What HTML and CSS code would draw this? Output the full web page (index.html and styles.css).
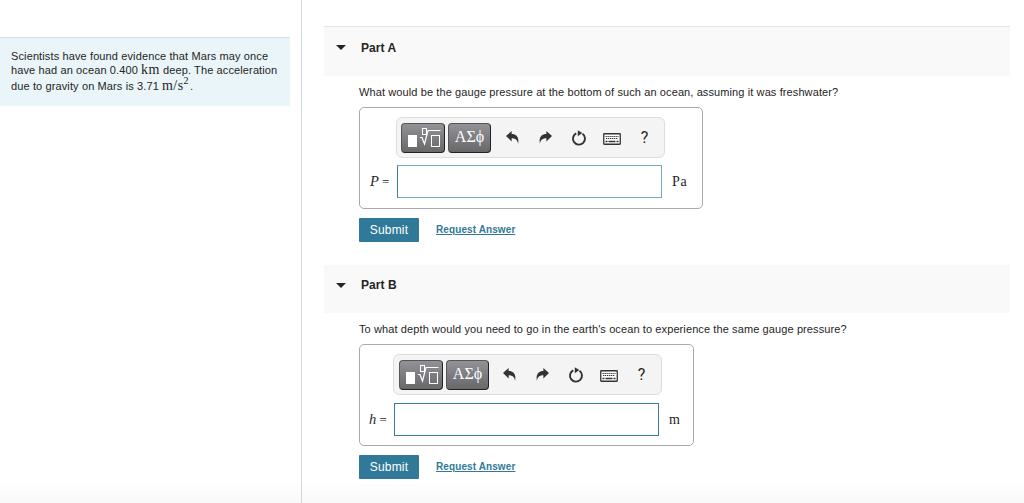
FILE: index.html
```
<!DOCTYPE html>
<html lang="en">
<head>
  <meta charset="UTF-8">
  <meta name="viewport" content="width=device-width, initial-scale=1.0">
  <title>Mars Ocean Pressure</title>
  <link rel="stylesheet" href="styles.css">
</head>
<body>
  <!-- shared icons -->
  <svg class="sprite" width="0" height="0">
    <symbol id="icon-template" viewBox="0 0 36 20">
      <rect x="3" y="7" width="9" height="12" fill="#fff"/>
      <rect x="17.500" y=".5" width="4" height="6" fill="none" stroke="#fff"/>
      <path d="M15 9.500h2l2.500 6.500 3.500-13.500h12.500" fill="none" stroke="#fff" stroke-width="1.200"/>
      <rect x="26.500" y="7.500" width="8" height="11" fill="none" stroke="#fff"/>
    </symbol>
    <symbol id="icon-undo" viewBox="0 0 12 12">
      <path d="M0 4.500 5.200 0v2.700c4.600 0 7.200 3.200 5.900 9.300-.3-3.600-2.200-5.100-5.900-5.200v2.800z" fill="#333"/>
    </symbol>
    <symbol id="icon-reset" viewBox="0 0 16 16">
      <path d="M5.300 3.300A6 6 0 1 0 11.500 3.800" fill="none" stroke="#333" stroke-width="1.900"/>
      <path d="M6.800.200v6L11.300 3z" fill="#333"/>
    </symbol>
    <symbol id="icon-keyboard" viewBox="0 0 18 12">
      <rect x=".75" y=".75" width="16.500" height="10.500" rx=".5" fill="#fff" stroke="#333" stroke-width="1.300"/>
      <path d="M2.500 3.500h13M3 5.500h12" stroke="#333" stroke-width="1.200" stroke-dasharray="1.300 .7"/>
      <path d="M2.500 8.500h2M5.500 8.500h7M13.500 8.500h2" stroke="#333" stroke-width="1.300"/>
    </symbol>
  </svg>

  <div class="page">
    <aside class="sidebar">
      <div class="intro">
        Scientists have found evidence that Mars may once<br>
        have had an ocean 0.400 <span class="math">km</span> deep. The acceleration<br>
        <span class="last-line">due to gravity on Mars is 3.71 <span class="math">m/s<sup>2</sup></span>.</span>
      </div>
    </aside>

    <main class="content">
      <section class="part part-a">
        <div class="part-header">
          <span class="arrow"></span>
          <h2>Part A</h2>
        </div>
        <p class="question">What would be the gauge pressure at the bottom of such an ocean, assuming it was freshwater?</p>
        <div class="answer-box">
          <div class="toolbar">
            <button class="tool-button"><svg width="36" height="20"><use href="#icon-template"/></svg></button>
            <button class="tool-button greek">ΑΣϕ</button>
            <span class="tool"><svg width="13" height="13"><use href="#icon-undo"/></svg></span>
            <span class="tool"><svg class="flip" width="13" height="13"><use href="#icon-undo"/></svg></span>
            <span class="tool"><svg width="16" height="16"><use href="#icon-reset"/></svg></span>
            <span class="tool keyboard"><svg width="18" height="12"><use href="#icon-keyboard"/></svg></span>
            <span class="tool help">?</span>
          </div>
          <div class="answer-row">
            <label for="answerA"><i>P</i> =</label>
            <input type="text" id="answerA">
            <span class="unit">Pa</span>
          </div>
        </div>
        <div class="actions">
          <button class="submit">Submit</button>
          <a href="#" class="request">Request Answer</a>
        </div>
      </section>

      <section class="part part-b">
        <div class="part-header">
          <span class="arrow"></span>
          <h2>Part B</h2>
        </div>
        <p class="question">To what depth would you need to go in the earth's ocean to experience the same gauge pressure?</p>
        <div class="answer-box">
          <div class="toolbar">
            <button class="tool-button"><svg width="36" height="20"><use href="#icon-template"/></svg></button>
            <button class="tool-button greek">ΑΣϕ</button>
            <span class="tool"><svg width="13" height="13"><use href="#icon-undo"/></svg></span>
            <span class="tool"><svg class="flip" width="13" height="13"><use href="#icon-undo"/></svg></span>
            <span class="tool"><svg width="16" height="16"><use href="#icon-reset"/></svg></span>
            <span class="tool keyboard"><svg width="18" height="12"><use href="#icon-keyboard"/></svg></span>
            <span class="tool help">?</span>
          </div>
          <div class="answer-row">
            <label for="answerB"><i>h</i> =</label>
            <input type="text" id="answerB">
            <span class="unit">m</span>
          </div>
        </div>
        <div class="actions">
          <button class="submit">Submit</button>
          <a href="#" class="request">Request Answer</a>
        </div>
      </section>
    </main>
  </div>
</body>
</html>
```
FILE: styles.css
```
* {
  box-sizing: border-box;
}
body {
  margin: 0;
  font-family: "Liberation Sans", Arial, sans-serif;
  font-size: 11px;
  color: #252525;
  background: #fff;
}
.sprite {
  display: block;
}
.page {
  display: flex;
  height: 503px;
  overflow: hidden;
  background: linear-gradient(#fff 482px, #f9f9f9 503px);
}
.sidebar {
  width: 302px;
  padding-top: 37px;
  border-right: 1px solid #d0d7dd;
}
.intro {
  width: 290px;
  height: 69px;
  padding: 11px 0 0 11px;
  border-top: 1px solid #d5e3e6;
  background: #e9f5f8;
  line-height: 14px;
  letter-spacing: 0.12px;
  white-space: nowrap;
}
.last-line {
  display: block;
  padding-top: 2px;
}
.math {
  font-family: "Liberation Serif", serif;
  font-size: 14px;
  line-height: 1;
  letter-spacing: 0.4px;
}
.math sup {
  margin-right: 1px;
  font-size: 10px;
  line-height: 0;
  vertical-align: 6px;
}
.content {
  flex: 1;
  padding: 26px 14px 0 22px;
}
.part {
  height: 239px;
}
.part-header {
  display: flex;
  align-items: center;
  height: 50px;
  padding: 0 0 8px 12px;
  border-top: 1px solid #e3e3e3;
  background: #f9f9f9;
}
.part-b .part-header {
  height: 48px;
  border-top: 0;
}
.arrow {
  width: 0;
  border: 5px solid transparent;
  border-top: 5px solid #252525;
  border-bottom: 0;
}
h2 {
  margin: 0 0 0 15px;
  font-size: 12px;
  line-height: 16px;
  letter-spacing: 0.05px;
}
.question {
  height: 31px;
  margin: 0 0 0 35px;
  padding-top: 9px;
  line-height: 14px;
  letter-spacing: 0.105px;
  white-space: nowrap;
}
.answer-box {
  width: 344px;
  height: 102px;
  margin-left: 35px;
  padding: 9px 0 0 10px;
  border: 1px solid #aaa;
  border-radius: 5px;
}
.part-b .answer-box {
  width: 335px;
  padding-left: 9px;
}
.toolbar {
  display: flex;
  align-items: center;
  width: 269px;
  height: 41px;
  margin-left: 26px;
  padding-left: 4px;
  border: 1px solid #ddd;
  border-radius: 6px;
  background: #f4f4f4;
}
.part-b .toolbar {
  margin-left: 24px;
  padding-left: 5px;
}
.tool-button {
  display: flex;
  align-items: center;
  justify-content: center;
  width: 44px;
  height: 30px;
  margin-right: 3px;
  padding: 0;
  border: 1px solid #555;
  border-right-color: #222;
  border-bottom-color: #222;
  border-radius: 4px;
  background: linear-gradient(#929297, #68686b);
  color: #fff;
}
.greek {
  width: 43px;
  margin-right: 5px;
  padding-bottom: 2px;
  font-family: "Liberation Serif", serif;
  font-size: 16px;
}
.part-b .greek {
  margin-right: 4px;
}
.tool {
  display: flex;
  align-items: center;
  justify-content: center;
  width: 33px;
  height: 30px;
}
.flip {
  transform: scaleX(-1);
}
.keyboard {
  padding-top: 3px;
}
.help {
  font-family: Roboto, sans-serif;
  font-size: 16px;
}
.answer-row {
  display: flex;
  align-items: center;
  height: 33px;
  margin-top: 7px;
  font-family: "Liberation Serif", serif;
  font-size: 13px;
}
.part-b .answer-row {
  margin-top: 8px;
}
.answer-row label {
  width: 27px;
  white-space: nowrap;
}
.part-b .answer-row label {
  width: 25px;
}
.answer-row label i {
  font-size: 14.5px;
}
.answer-row input {
  width: 265px;
  height: 33px;
  padding: 0 6px;
  border: 1px solid #377d9c;
  background: #fff;
}
.part-a .answer-row input {
  border-color: #79a9c2;
  border-left-color: #377d9c;
}
.unit {
  margin-left: 10px;
  font-size: 14px;
  letter-spacing: 0.6px;
}
.actions {
  display: flex;
  align-items: center;
  margin: 9px 0 0 35px;
}
.submit {
  width: 60px;
  height: 24px;
  padding: 0;
  border: 0;
  border-radius: 1px;
  background: #317999;
  color: #fff;
  font-family: inherit;
  font-size: 12px;
  letter-spacing: 0.2px;
}
.request {
  margin: -2px 0 0 17px;
  color: #317999;
  font-size: 10px;
  font-weight: bold;
  letter-spacing: 0.1px;
}
```
